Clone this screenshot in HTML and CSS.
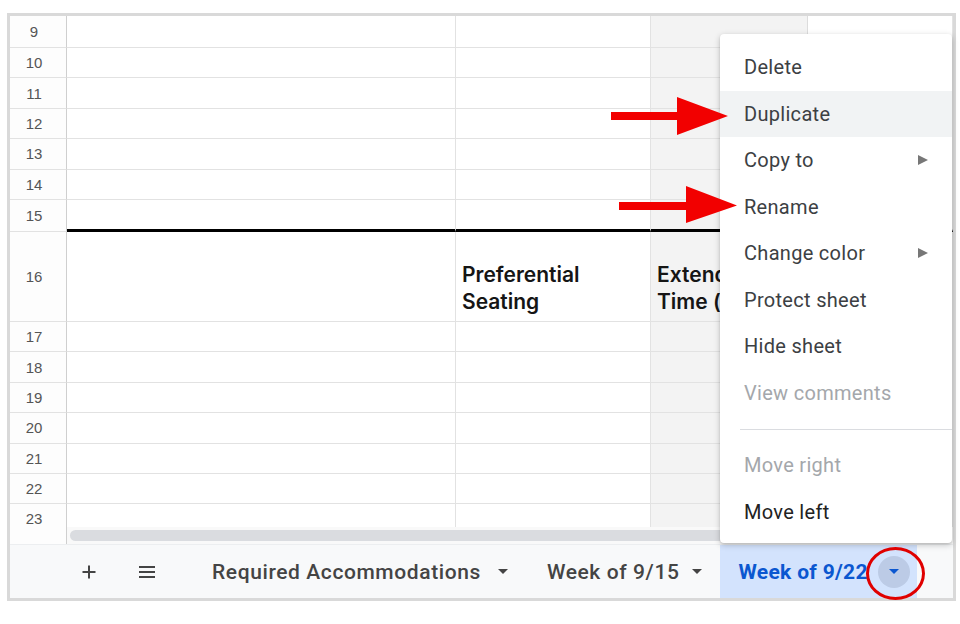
FILE: index.html
```html
<!DOCTYPE html>
<html>
<head>
<meta charset="utf-8">
<link rel="stylesheet" href="styles.css">
</head>
<body>
<div class="page">
  <div class="frame">
    <div class="grid">
      <div class="row first"><div class="hd">9</div><div class="c"></div><div class="c"></div><div class="c g"></div><div class="c"></div></div>
      <div class="row"><div class="hd">10</div><div class="c"></div><div class="c"></div><div class="c g"></div><div class="c"></div></div>
      <div class="row"><div class="hd">11</div><div class="c"></div><div class="c"></div><div class="c g"></div><div class="c"></div></div>
      <div class="row"><div class="hd">12</div><div class="c"></div><div class="c"></div><div class="c g"></div><div class="c"></div></div>
      <div class="row"><div class="hd">13</div><div class="c"></div><div class="c"></div><div class="c g"></div><div class="c"></div></div>
      <div class="row"><div class="hd">14</div><div class="c"></div><div class="c"></div><div class="c g"></div><div class="c"></div></div>
      <div class="row thick"><div class="hd">15</div><div class="c"></div><div class="c"></div><div class="c g"></div><div class="c"></div></div>
      <div class="row tall"><div class="hd">16</div><div class="c"></div><div class="c txt">Preferential<br>Seating</div><div class="c g txt">Extended<br>Time (mins)</div><div class="c"></div></div>
      <div class="row"><div class="hd">17</div><div class="c"></div><div class="c"></div><div class="c g"></div><div class="c"></div></div>
      <div class="row"><div class="hd">18</div><div class="c"></div><div class="c"></div><div class="c g"></div><div class="c"></div></div>
      <div class="row"><div class="hd">19</div><div class="c"></div><div class="c"></div><div class="c g"></div><div class="c"></div></div>
      <div class="row"><div class="hd">20</div><div class="c"></div><div class="c"></div><div class="c g"></div><div class="c"></div></div>
      <div class="row"><div class="hd">21</div><div class="c"></div><div class="c"></div><div class="c g"></div><div class="c"></div></div>
      <div class="row"><div class="hd">22</div><div class="c"></div><div class="c"></div><div class="c g"></div><div class="c"></div></div>
      <div class="row last"><div class="hd">23</div><div class="c"></div><div class="c"></div><div class="c g"></div><div class="c"></div></div>
    </div>
    <div class="scrollrow">
      <div class="scroll-hd"></div>
      <div class="scroll-track"><div class="thumb"></div></div>
    </div>
    <div class="tabbar">
      <span class="icon plus">
        <svg width="16" height="16" viewBox="0 0 16 16"><path d="M8 1.5v13M1.5 8h13" stroke="#444" stroke-width="2" fill="none"/></svg>
      </span>
      <span class="icon list">
        <svg width="18" height="14" viewBox="0 0 18 14"><path d="M1 2h16M1 7h16M1 12h16" stroke="#444" stroke-width="2" fill="none"/></svg>
      </span>
      <div class="tab t1"><span class="tab-label">Required Accommodations</span><span class="caret"></span></div>
      <div class="tab t2"><span class="tab-label">Week of 9/15</span><span class="caret"></span></div>
      <div class="tab active"><span class="tab-label">Week of 9/22</span><span class="drop"><span class="caret blue"></span></span></div>
    </div>
  </div>

  <div class="menu">
    <div class="item">Delete</div>
    <div class="item hover">Duplicate</div>
    <div class="item">Copy to<span class="sub"></span></div>
    <div class="item">Rename</div>
    <div class="item">Change color<span class="sub"></span></div>
    <div class="item">Protect sheet</div>
    <div class="item">Hide sheet</div>
    <div class="item disabled">View comments</div>
    <div class="sep"></div>
    <div class="item disabled">Move right</div>
    <div class="item dark">Move left</div>
  </div>

  <svg class="arrows" width="960" height="624" viewBox="0 0 960 624">
    <polygon points="611,112 677,112 677,97 728,116 677,135 677,120 611,120" fill="#f20000"/>
    <polygon points="619,202 686,202 686,186 737,205.5 686,223 686,210 619,210" fill="#f20000"/>
  </svg>
  <div class="ring"></div>
</div>
</body>
</html>
```

FILE: styles.css
```css
* { box-sizing: border-box; }
html, body { margin: 0; padding: 0; background: #fff; }
body { width: 960px; height: 624px; overflow: hidden; font-family: Roboto, "Liberation Sans", sans-serif; }

.page { position: relative; width: 960px; height: 624px; padding: 13px 0 0 7px; }

.frame {
  width: 949px;
  height: 588px;
  border: 3px solid #d9d9d9;
  display: flex;
  flex-direction: column;
  background: #fff;
}

.grid { height: 511px; display: flex; flex-direction: column; overflow: hidden; }

.row {
  display: grid;
  grid-template-columns: 57px 389px 195px 157px 1fr;
  height: 30.4px;
  flex: none;
}
.row.first { height: 32px; }
.row.thick { height: 32px; }
.row.tall { height: 90px; }
.row.last { height: 22.6px; }

.hd {
  border-right: 1px solid #cfcfcf;
  border-bottom: 1px solid #e2e2e2;
  background: #fdfdfd;
  display: flex;
  align-items: center;
  justify-content: center;
  padding-right: 8px;
  font-family: "Liberation Sans", Arial, sans-serif;
  font-size: 15px;
  color: #555;
}
.row.last .hd { border-bottom: none; align-items: flex-end; padding-bottom: 0; }

.c {
  border-right: 1px solid #e2e2e2;
  border-bottom: 1px solid #e2e2e2;
  overflow: hidden;
}
.row.last .c { border-bottom: none; }
.c.g { background: #f3f3f3; border-right-color: #dcdcdc; }
.row.thick .c { border-bottom: 3px solid #000; }

.c.txt {
  display: flex;
  align-items: flex-end;
  padding: 0 0 6px 6px;
  white-space: nowrap;
  font-family: Inter, "Noto Sans", sans-serif;
  font-weight: 600;
  font-size: 21px;
  line-height: 27px;
  color: #151515;
}

.scrollrow { height: 17px; display: flex; background: #f9f9f9; flex: none; }
.scroll-hd { width: 57px; border-right: 1px solid #cfcfcf; background: #fdfdfd; }
.scroll-track { flex: 1; padding: 3px 0 3px 3px; }
.thumb { height: 11px; width: 720px; background: #dadce0; border-radius: 6px; }

.tabbar {
  flex: 1;
  display: flex;
  align-items: center;
  background: #f8f9fa;
  border-top: 1px solid #eceef0;
}
.icon { display: flex; align-items: center; justify-content: center; width: 18px; height: 18px; flex: none; }
.icon.plus { margin-left: 70px; }
.icon.list { margin-left: 40px; }

.tab {
  display: flex;
  align-items: center;
  height: 100%;
  font-size: 21px;
  letter-spacing: 0.6px;
  font-weight: 500;
  color: #444;
  white-space: nowrap;
  flex: none;
}
.tab.t1 { margin-left: 56px; }
.tab.t2 { margin-left: 39px; }
.caret {
  width: 0; height: 0;
  border-left: 5px solid transparent;
  border-right: 5px solid transparent;
  border-top: 5px solid #444;
  margin-left: 17px;
  flex: none;
}
.tab.t2 .caret { margin-left: 13px; }
.tab.active {
  margin-left: 18px;
  width: 197px;
  background: #d3e3fd;
  color: #0b57d0;
  font-weight: 700;
  letter-spacing: 0.3px;
  padding: 0 7px 0 18px;
}
.drop {
  width: 32px; height: 32px; border-radius: 50%;
  background: #bccbe6;
  display: flex; align-items: center; justify-content: center;
  margin-left: auto;
  flex: none;
}
.caret.blue { border-top-color: #0b57d0; margin-left: 0; }

.menu {
  position: absolute;
  left: 720px;
  top: 34px;
  width: 232px;
  height: 509px;
  background: #fff;
  border-radius: 4px;
  box-shadow: 0 2px 6px rgba(0,0,0,0.22), 0 1px 2px rgba(0,0,0,0.12);
  padding: 10px 0 8px;
}
.item {
  height: 46.5px;
  display: flex;
  align-items: center;
  padding-left: 24px;
  padding-right: 24px;
  font-size: 20px;
  letter-spacing: 0.3px;
  color: #3c4043;
}
.item.hover { background: #f1f3f4; }
.item.disabled { color: #a4a7ab; }
.item.dark { color: #222; }
.sub {
  margin-left: auto;
  width: 0; height: 0;
  border-top: 5px solid transparent;
  border-bottom: 5px solid transparent;
  border-left: 10px solid #777;
}
.sep { margin: 13px 0 12px 20px; height: 1px; background: #dadce0; }

.arrows { position: absolute; left: 0; top: 0; pointer-events: none; }
.ring {
  position: absolute;
  left: 866px;
  top: 547px;
  width: 59px;
  height: 53px;
  border: 3px solid #e00000;
  border-radius: 50%;
}
```
